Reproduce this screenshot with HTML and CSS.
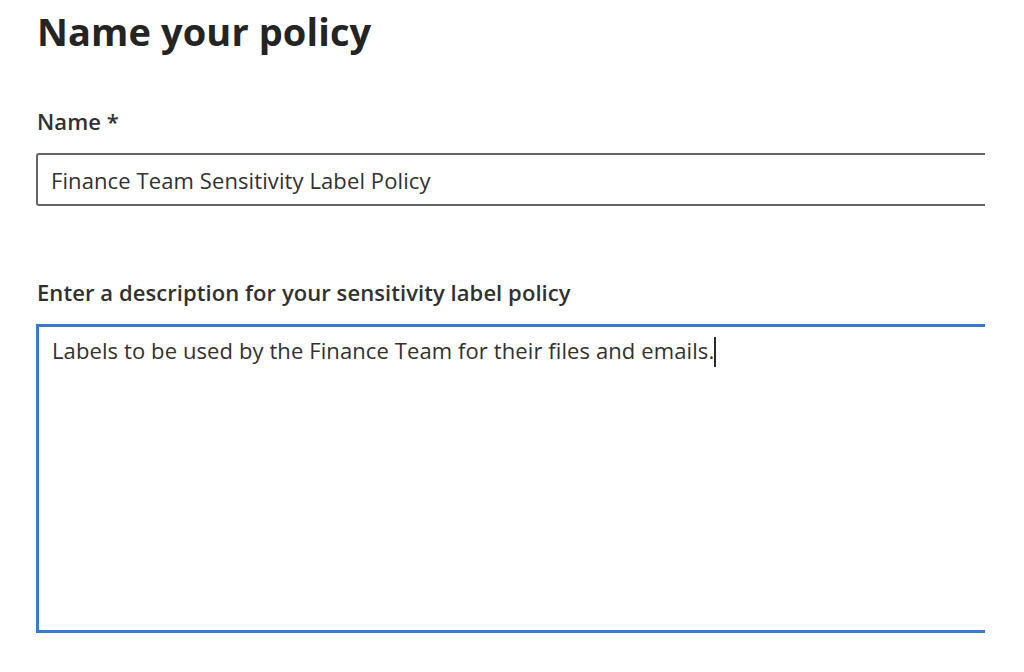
FILE: index.html
```html
<!DOCTYPE html>
<html lang="en">
<head>
<meta charset="utf-8">
<title>Name your policy</title>
<link rel="stylesheet" href="styles.css">
</head>
<body>
<main class="page">
  <h1 class="title">Name your policy</h1>
  <div class="field name-field">
    <div class="label">Name *</div>
    <div class="textbox">Finance Team Sensitivity Label Policy</div>
  </div>
  <div class="field desc-field">
    <div class="label">Enter a description for your sensitivity label policy</div>
    <div class="textarea">Labels to be used by the Finance Team for their files and emails.<span class="caret"></span></div>
  </div>
</main>
</body>
</html>
```
FILE: styles.css
```css
html, body {
  margin: 0;
  padding: 0;
  background: #ffffff;
}
.page {
  width: 949px;
  padding-left: 36px;
  display: flex;
  flex-direction: column;
  font-family: "Open Sans", "Noto Sans", sans-serif;
  color: #323130;
}
.title {
  margin: 9px 0 0 1px;
  font-size: 38px;
  line-height: 44px;
  font-weight: 700;
  color: #242424;
  letter-spacing: 0.1px;
}
.field {
  display: flex;
  flex-direction: column;
}
.name-field {
  margin-top: 53px;
  gap: 17px;
}
.desc-field {
  margin-top: 71px;
  gap: 17px;
}
.label {
  font-size: 22px;
  line-height: 30px;
  font-weight: 600;
  padding-left: 1px;
  letter-spacing: 0.07px;
}
.textbox {
  border: 2px solid #646464;
  border-right: none;
  border-radius: 3px 0 0 3px;
  padding: 10px 0 0 13px;
  box-sizing: border-box;
  height: 53px;
  font-size: 22px;
  line-height: 30px;
  letter-spacing: 0.1px;
}
.textarea {
  border: 3px solid #3a78d6;
  border-right: none;
  padding: 8px 0 0 13px;
  box-sizing: border-box;
  height: 309px;
  font-size: 22px;
  line-height: 30px;
  letter-spacing: 0.1px;
}
.caret {
  display: inline-block;
  width: 2px;
  height: 30px;
  background: #2a2a2a;
  vertical-align: -8px;
}
```
